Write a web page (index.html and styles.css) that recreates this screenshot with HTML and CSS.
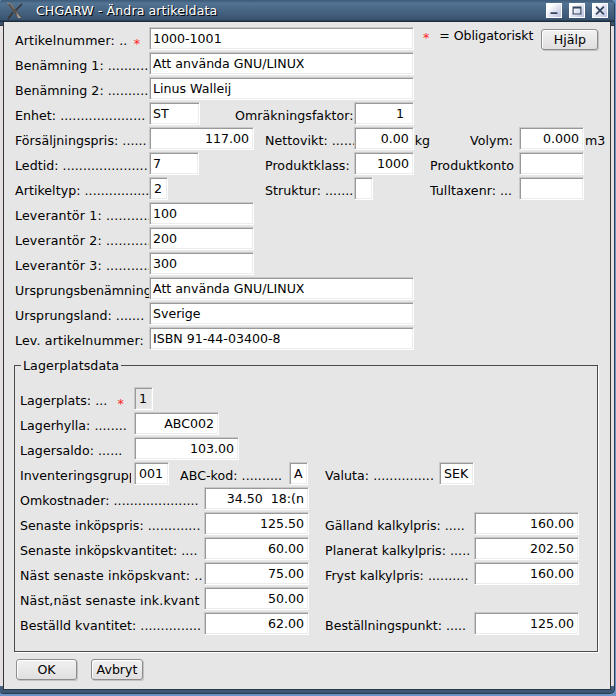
FILE: index.html
```html
<!DOCTYPE html>
<html lang="sv">
<head>
<meta charset="utf-8">
<title>CHGARW - Ändra artikeldata</title>
<link rel="stylesheet" href="styles.css">
</head>
<body>
<div class="window">
  <header class="titlebar">
    <svg class="logo" width="18" height="18" viewBox="0 0 18 18"><path d="M1 1h4l11 15h-4z" fill="#58534f"/><path d="M1 1l4 1 3 5" fill="none" stroke="#8b8a88"/><path d="M16 2L10 8M7 10l-5 7" stroke="#3a3532" stroke-width="1.6"/><path d="M10 10l5 6h-3z" fill="#b0a59c"/></svg>
    <h1>CHGARW - Ändra artikeldata</h1>
    <div class="controls">
      <svg class="ctl" viewBox="0 0 16 15"><path d="M4 10.5h8" stroke="#34465f" stroke-width="2"/></svg>
      <svg class="ctl" viewBox="0 0 16 15"><path d="M3.5 3.5h9v8h-9zM3 4.5h10" fill="none" stroke="#34465f" stroke-width="1.3"/></svg>
      <svg class="ctl" viewBox="0 0 16 15"><path d="M3.5 3l9 9M12.5 3l-9 9" stroke="#34465f" stroke-width="2"/></svg>
    </div>
  </header>
  <main class="content">
    <div class="form">
      <section class="article">
        <label class="c1 loose">Artikelnummer: .. <b class="star near">*</b></label><span class="field w265">1000-1001</span>
        <label class="c1">Benämning 1: ..........</label><span class="field w265">Att använda GNU/LINUX</span>
        <label class="c1">Benämning 2: ..........</label><span class="field w265">Linus Walleij</span>
        <label class="c1">Enhet: .....................</label><span class="field w51">ST</span>
        <label class="c3 wide">Omräkningsfaktor:</label><span class="field w60 num inset">1</span>
        <label class="c1">Försäljningspris: ......</label><span class="field w105 num">117.00</span>
        <label class="c3">Nettovikt: ......</label><span class="unit"><span class="field w60 num">0.00</span><label>kg</label></span>
        <label class="c5 volume">Volym:</label><span class="unit"><span class="field w65 num">0.000</span><label>m3</label></span>
        <label class="c1">Ledtid: .....................</label><span class="field w50">7</span>
        <label class="c3">Produktklass:</label><span class="field w60 num">1000</span>
        <label class="c5">Produktkonto</label><span class="field w65"></span>
        <label class="c1">Artikeltyp: ................</label><span class="field w19 code">2</span>
        <label class="c3">Struktur: .......</label><span class="field w19"></span>
        <label class="c5">Tulltaxenr: ...</label><span class="field w65"></span>
        <label class="c1 loose">Leverantör 1: ...........</label><span class="field w105">100</span>
        <label class="c1 loose">Leverantör 2: ...........</label><span class="field w105">200</span>
        <label class="c1 loose">Leverantör 3: ...........</label><span class="field w105">300</span>
        <label class="c1">Ursprungsbenämning</label><span class="field w265">Att använda GNU/LINUX</span>
        <label class="c1">Ursprungsland: .......</label><span class="field w265">Sverige</span>
        <label class="c1 loose">Lev. artikelnummer:</label><span class="field w265">ISBN 91-44-03400-8</span>
      </section>
      <aside class="help"><b class="star">*</b><span class="legend-text">= Obligatoriskt</span><button class="btn">Hjälp</button></aside>
    </div>
    <fieldset class="group">
      <legend>Lagerplatsdata</legend>
      <div class="row"><label class="l114">Lagerplats: ... <b class="star far">*</b></label><span class="field w19 code off">1</span></div>
      <div class="row"><label class="l114">Lagerhylla: ........</label><span class="field w85 num">ABC002</span></div>
      <div class="row"><label class="l114">Lagersaldo: ......</label><span class="field w105 num">103.00</span></div>
      <div class="row"><label class="l114 cut">Inventeringsgrupp</label><span class="field w35 code">001</span><label class="l109 gap11">ABC-kod: ..........</label><span class="field w19 code">A</span><label class="l114 gap17">Valuta: ...............</label><span class="field w35 code">SEK</span></div>
      <div class="row"><label class="l184">Omkostnader: .....................</label><span class="field w105 num">34.50&nbsp; 18:(n</span></div>
      <div class="row"><label class="l184">Senaste inköpspris: .............</label><span class="field w105 num">125.50</span><label class="l149 gap16 tight">Gälland kalkylpris: .....</label><span class="field w105 num">160.00</span></div>
      <div class="row"><label class="l184">Senaste inköpskvantitet: ....</label><span class="field w105 num">60.00</span><label class="l149 gap16">Planerat kalkylpris: .....</label><span class="field w105 num">202.50</span></div>
      <div class="row"><label class="l184 loose">Näst senaste inköpskvant: ..</label><span class="field w105 num">75.00</span><label class="l149 gap16">Fryst kalkylpris: ..........</label><span class="field w105 num">160.00</span></div>
      <div class="row"><label class="l184 loose">Näst,näst senaste ink.kvant</label><span class="field w105 num">50.00</span></div>
      <div class="row"><label class="l184">Beställd kvantitet: ...............</label><span class="field w105 num">62.00</span><label class="l149 gap16 tight">Beställningspunkt: .....</label><span class="field w105 num">125.00</span></div>
    </fieldset>
    <footer class="actions"><button class="btn ok">OK</button><button class="btn cancel">Avbryt</button></footer>
  </main>
</div>
</body>
</html>
```
FILE: styles.css
```css
* { box-sizing: border-box; }
body { margin: 0; background: #6b94c9; font: 12.6px/15px "DejaVu Sans", sans-serif; color: #000; }
.window { width: 615px; height: 694px; background: linear-gradient(#38536f 25px, #333 25px, #333 26px, #e4dfe2 26px, #e4dfe2 686px, #466787 686px, #38536e); border-radius: 3px 5px 5px 3px; border-right: 1px solid #2c3d50; border-bottom: 1px solid #2c3d50; overflow: hidden; }
.titlebar { height: 22px; display: flex; align-items: flex-start; padding: 2px 6px 0 6px; background: linear-gradient(#3d5a77, #527393 15%, #38536f 90%, #1e2d3c 96%); }
h1 { margin: 1px 0 0 12px; font-size: 12.6px; line-height: 15px; letter-spacing: .08px; font-weight: normal; color: #fff; text-shadow: 1px 1px 0 #000; }
.controls { margin: 1px 0 0 auto; display: flex; gap: 7px; }
.ctl { width: 16px; height: 15px; background: linear-gradient(135deg, #fff 20%, #b7bfe0); border: 1px solid #fff; }
.content { height: 668px; margin: 0 3px 0 3px; background: #e6e6e6; border-left: 1px solid #333; border-right: 1px solid #333; border-bottom: 1px solid #26384a; padding: 5px 0 0 11px; }
.form { display: flex; height: 331px; }
.article { width: 404px; display: grid; grid-template-columns: 134px 116px 89px 76px 89px 95px; grid-auto-rows: 25px; flex: none; }
label { display: block; height: 23px; padding-top: 6px; white-space: nowrap; overflow: hidden; letter-spacing: .05px; }
.loose { letter-spacing: .16px; }
.tight { letter-spacing: 0; }
.c1 { grid-column: 1; }
.c3 { grid-column: 3; }
.c5 { grid-column: 5; }
.wide { margin-left: -30px; }
.volume { padding-left: 40px; }
.unit { display: flex; }
.unit label { padding-left: 1px; }
.field { display: block; height: 23px; padding: 3px 3px 0 3px; background: #fff; border: 1px solid #fff; border-top-color: #c9c9c9; border-left-color: #c9c9c9; box-shadow: inset 1px 1px #999, inset -1px -1px #ececec; line-height: 15px; white-space: nowrap; }
.num { text-align: right; padding-right: 4px; padding-left: 0; }
.inset { padding-right: 9px; }
.code { padding: 3px 0 0 4px; }
.off { background: #e6e6e6; }
.w265 { width: 265px; grid-column: 2 / 5; }
.w105 { width: 105px; }
.w85 { width: 85px; }
.w65 { width: 65px; }
.w60 { width: 60px; }
.w51 { width: 51px; }
.w50 { width: 50px; }
.w35 { width: 35px; }
.w19 { width: 19px; }
.star { color: #f22; font-weight: normal; position: relative; top: 3px; }
.near { margin-left: 2px; }
.far { margin-left: 6px; }
.help { display: flex; align-items: flex-start; margin-left: 4px; }
.legend-text { width: 102px; margin: 1px 0 0 10px; white-space: nowrap; letter-spacing: -.08px; }
.btn { font: inherit; color: #000; height: 21px; width: 57px; padding: 0; border: 1px solid #8d8d8d; border-radius: 3px; background: linear-gradient(#f2f2f2, #e0dede); box-shadow: inset 1px 1px #fff, 1px 1px #c2c2c2; }
.help .btn { margin-top: 2px; }
.group { margin: 0 0 0 -1px; padding: 14px 0 0 5px; border: 1px solid #4b4b4b; box-shadow: 1px 1px #fff; width: 584px; height: 294px; }
legend { padding: 0 2px; margin-left: 1px; line-height: 15px; letter-spacing: .1px; }
.row { display: flex; height: 25px; }
.row label, .row .field { flex: none; }
.l114 { width: 114px; }
.l109 { width: 109px; }
.l149 { width: 149px; }
.l184 { width: 184px; }
.cut { width: 111px; margin-right: 3px; }
.gap11 { margin-left: 11px; }
.gap16 { margin-left: 16px; }
.gap17 { margin-left: 17px; }
.actions { display: flex; gap: 14px; padding: 7px 0 0 1px; }
.ok { width: 61px; }
.cancel { width: 52px; }
```
